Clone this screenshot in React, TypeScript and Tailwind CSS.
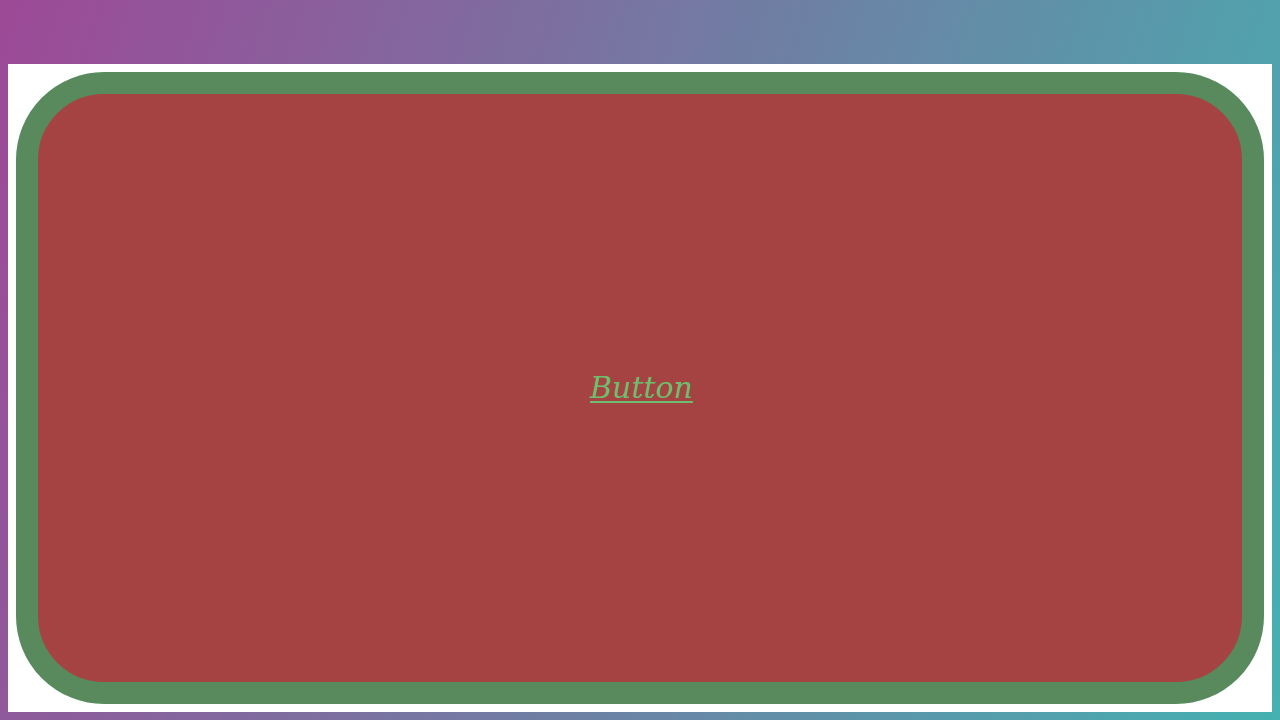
export default function App() {
  return (
    <div className="w-[1280px] h-[720px] bg-[linear-gradient(108deg,#9d4996,#44b1b1)] pt-[64px] px-2 pb-2">
      <div className="w-full h-full bg-white p-2">
        <button className="w-full h-full flex items-center justify-center border-[22px] border-[#588a5e] bg-[#a54343] rounded-[88px]">
          <span className="pl-[3px] text-[30px] italic underline decoration-2 underline-offset-[3px] text-[#6dbf6d] leading-none [font-family:'DejaVu_Serif',serif]">
            Button
          </span>
        </button>
      </div>
    </div>
  );
}
